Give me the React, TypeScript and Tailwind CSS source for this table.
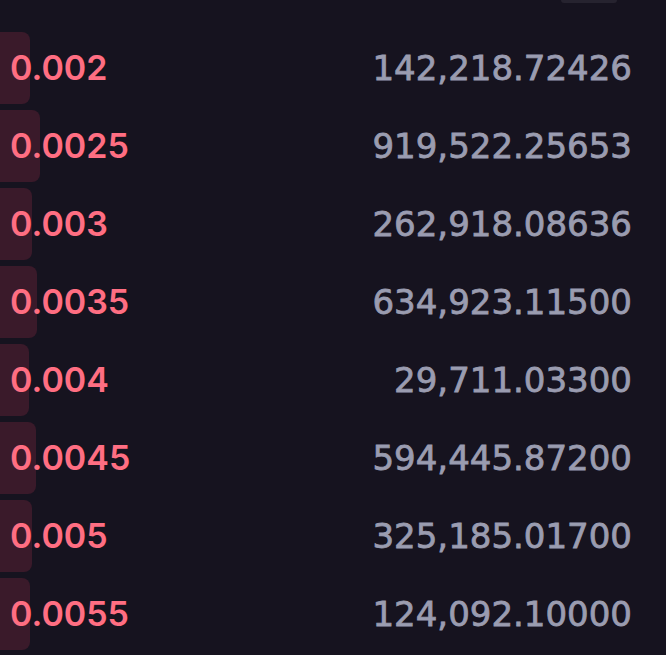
const rows = [
  { price: "0.002", amount: "142,218.72426", depth: 30 },
  { price: "0.0025", amount: "919,522.25653", depth: 40 },
  { price: "0.003", amount: "262,918.08636", depth: 32 },
  { price: "0.0035", amount: "634,923.11500", depth: 37 },
  { price: "0.004", amount: "29,711.03300", depth: 29 },
  { price: "0.0045", amount: "594,445.87200", depth: 36 },
  { price: "0.005", amount: "325,185.01700", depth: 32 },
  { price: "0.0055", amount: "124,092.10000", depth: 30 },
];

export default function App() {
  return (
    <div className="w-[666px] h-[655px] overflow-hidden bg-[#16131f]">
      <div className="flex justify-end pr-[49px]">
        <div className="w-[56px] h-[3px] rounded-b-lg bg-[#26232f]" />
      </div>
      <div className="mt-[29px] flex flex-col gap-[6px]">
        {rows.map((r) => (
          <div key={r.price} className="relative h-[72px] flex items-center justify-between pl-[10px] pr-[34px]">
            <div
              className="absolute left-0 top-0 bottom-0 rounded-r-lg bg-[#3a1a2a]"
              style={{ width: r.depth }}
            />
            <span
              className="relative text-[34px] font-semibold text-[#ff6e82] leading-none"
              style={{ fontFamily: "Inter, 'Noto Sans', sans-serif" }}
            >
              {r.price}
            </span>
            <span
              className="relative text-[34px] font-normal text-[#9a9cb0] leading-none [-webkit-text-stroke:0.8px_#9a9cb0]"
              style={{ fontFamily: "'DejaVu Sans', sans-serif" }}
            >
              {r.amount}
            </span>
          </div>
        ))}
      </div>
    </div>
  );
}
